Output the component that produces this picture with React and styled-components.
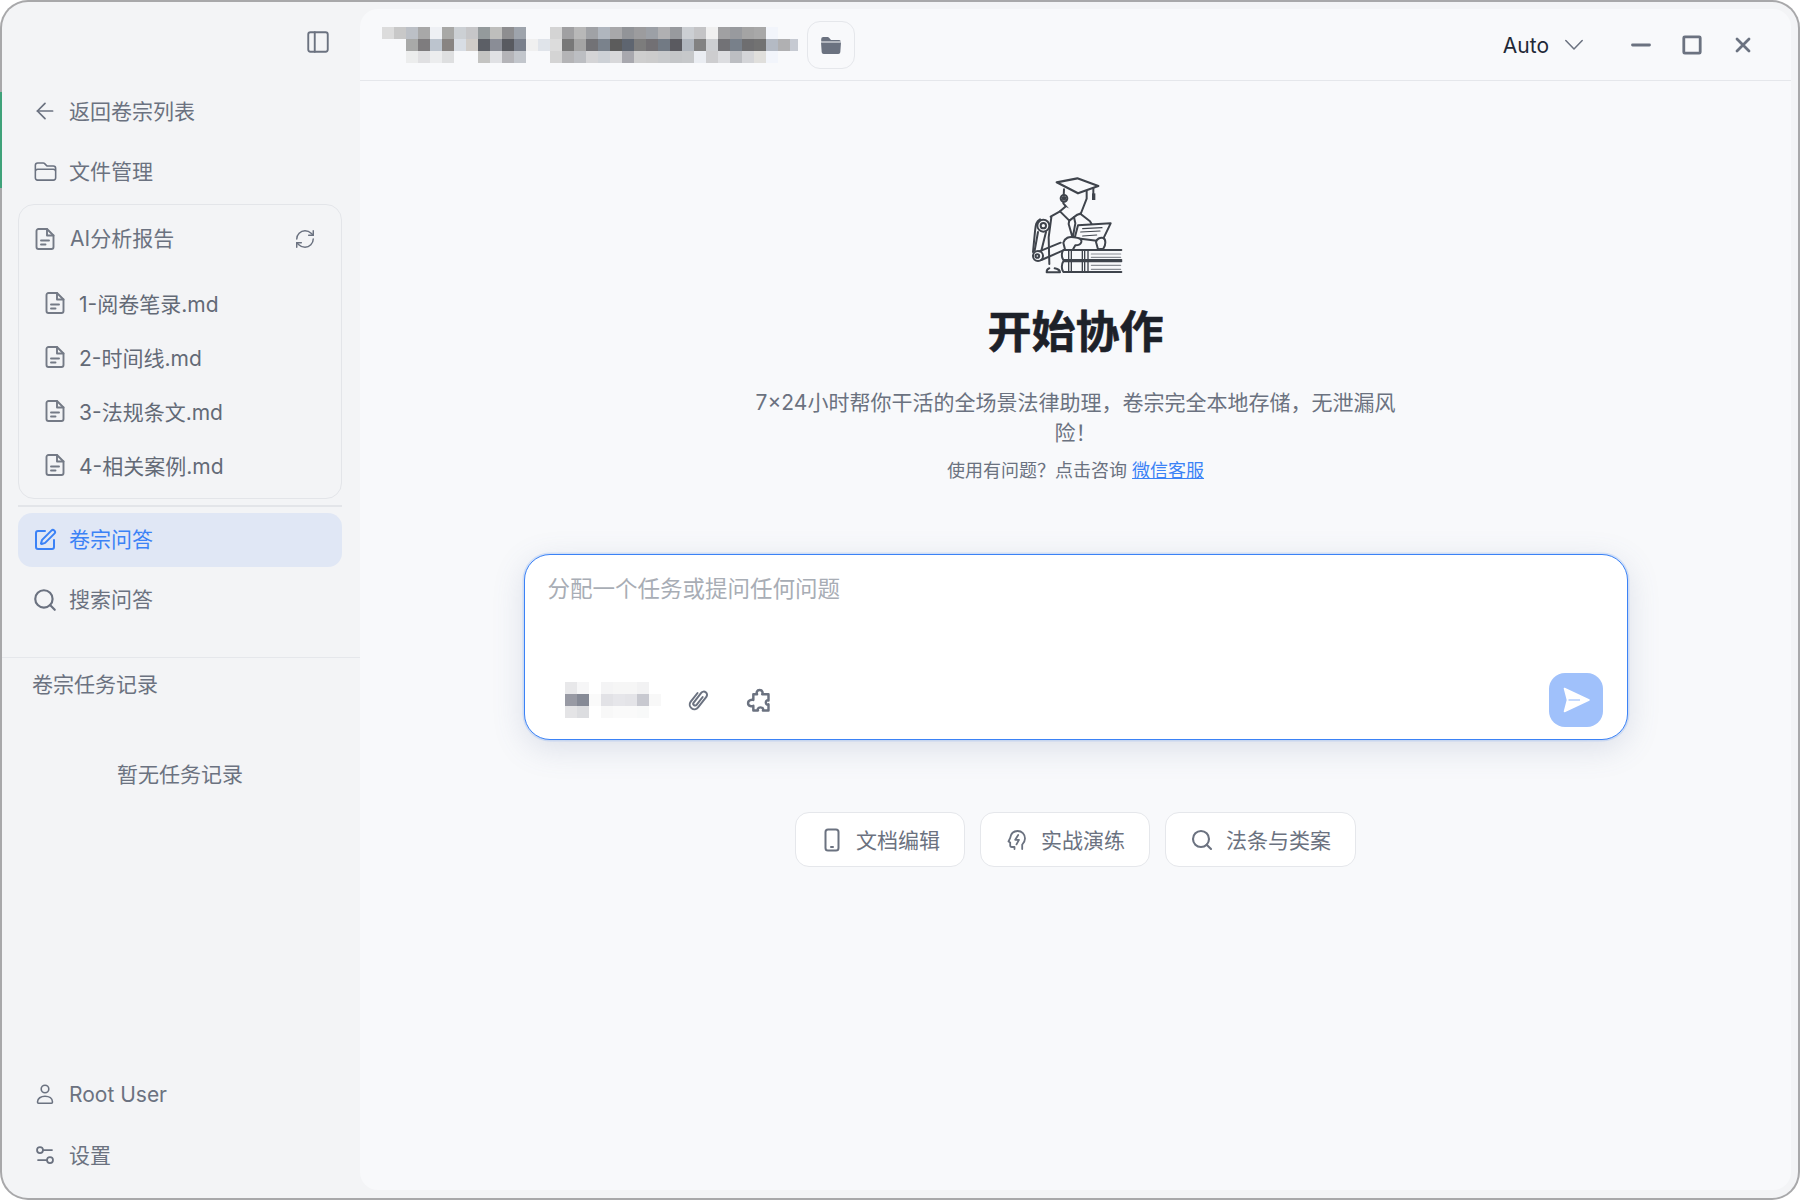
import React from 'react'
import styled, { createGlobalStyle } from 'styled-components'
import { ArrowLeft, PanelLeft, RefreshCw, SquarePen, Search, Settings2 } from 'lucide-react'
import { HiOutlineFolder } from 'react-icons/hi2'

const titleCells = [
  { col: 0, cells: ['#dcdcdc', '#c8c8c8', '#bcc0c6', '#a8a8a8', '#eef0f4', '#a8a8a6', '#ccd0d4', '#c6c6c8', '#949a9c', '#bebebc', '#8e8e90', '#9ea4ac', '', '', '#d4d4d4', '#a0a0a2', '#b8b8b8', '#a0a2a6', '#b0b6be', '#a8a8aa', '#929498', '#9c9c9e', '#9ca0a6', '#b0b0b2', '#989a9e', '#cccfd3', '#c4c4c6', '#f0f0f0', '#a0a0a2', '#989a9e', '#a4a4a4', '#a8a8a8', '#f2f5fb'] },
  { col: 2, cells: ['#a8a9a8', '#7e7c7e', '#bcc4ce', '#888482', '#d8dde4', '#d0ccc8', '#5c5f66', '#8a8d96', '#585a60', '#7a808c', '#f0f0f0', '#e0e4ea', '#dcdcdc', '#787878', '#a4a4a4', '#727276', '#7a828c', '#5c5c5c', '#5e6570', '#7c7c7c', '#727074', '#727a84', '#5a5a60', '#b0b6be', '#828282', '#cdcfd2', '#727276', '#78808a', '#6e6e70', '#727272', '#b4bac4', '#b0b0b2', '#c6cad2'] },
  { col: 2, cells: ['#eceded', '#e0e0e2', '#ecedee', '#dedfe0', '', '', '#c4c4c2', '#e0e1e4', '#b4b4b8', '#c2c6cc', '', '', '#d4d4d4', '#b4b4b6', '#bcbec2', '#d4d4d6', '#cdd1d6', '#d8d8da', '#a8a8ae', '#cecece', '#cccccc', '#c8cacc', '#c4c6c8', '#c6c8ca', '#eaedf2', '#cdcdcf', '#dcdde0', '#bcbec2', '#d4d5d8', '#e0dfdc', '#f2f5fb'] },
]

const modelCells = [
  { col: 0, cells: ['#e8e8ea', '#f6f6f7', '', '#f4f4f5', '#f6f6f6', '#f6f6f6', '#f2f2f3'] },
  { col: 0, cells: ['#989aa4', '#868a96', '#fafafa', '#e2e2e6', '#e6e6ea', '#e4e4e8', '#c8c9d0', '#f8f8f8'] },
  { col: 0, cells: ['#e4e4e6', '#dcdde0', '', '#f8f8f8', '#fafafa', '#fafafa', '#f8f9f9'] },
]

const fileNames = ['1-阅卷笔录.md', '2-时间线.md', '3-法规条文.md', '4-相关案例.md']

const GlobalStyle = createGlobalStyle`
  * { box-sizing: border-box; }
  html, body { margin: 0; padding: 0; background: #fff; }
  body {
    font-family: Inter, "Noto Sans CJK SC", sans-serif;
    color: #6b7280;
  }
`

const Desktop = styled.div`
  position: relative;
  width: 1800px;
  height: 1200px;
  padding: 2px;
  overflow: hidden;

  &::before {
    content: '';
    position: absolute;
    z-index: 2;
    left: 0;
    top: 92px;
    width: 2px;
    height: 96px;
    background: #3fa27a;
  }
`

const Window = styled.div`
  display: flex;
  width: 100%;
  height: 100%;
  background: #f3f4f6;
  border-radius: 26px;
  box-shadow: 0 0 0 2px #a8a8aa;
  overflow: hidden;
`

const Sidebar = styled.aside`
  display: flex;
  flex-direction: column;
  flex: 0 0 358px;
  padding-bottom: 16px;
`

const SidebarTop = styled.div`
  display: flex;
  justify-content: flex-end;
  align-items: center;
  height: 82px;
  padding: 0 29px 2px 0;
  color: #6b7280;
`

const NavGroup = styled.nav`
  display: flex;
  flex-direction: column;
  gap: 6px;
  padding: 0 18px 0 16px;
`

const NavItem = styled.div`
  display: flex;
  align-items: center;
  gap: 12px;
  height: 54px;
  padding: 0 15px;
  border-radius: 14px;
  font-size: 21px;
  color: ${(p) => (p.$active ? '#3b82f6' : '#6b7280')};
  background: ${(p) => (p.$active ? '#e0e7f5' : 'transparent')};
`

// the CJK face sits a little low next to the icons
const Label = styled.span`
  margin-bottom: ${(p) => p.$lift ?? 3}px;
  flex: ${(p) => (p.$grow ? 1 : 'none')};
`

const BackIcon = styled(ArrowLeft)`
  margin: 0 -1px;
`

const FolderIcon = styled(HiOutlineFolder)`
  margin: 0 -0.5px;
`

const SearchIcon = styled(Search)`
  margin: 0 -1px;
`

const ReportBox = styled.div`
  display: flex;
  flex-direction: column;
  height: 295px;
  border: 1.5px solid #e3e5e9;
  border-radius: 16px;
`

const ReportHead = styled.div`
  display: flex;
  align-items: center;
  gap: 13px;
  height: 71px;
  padding: 0 25px 4px 14px;
  font-size: 21px;
`

const FileRow = styled.div`
  display: flex;
  align-items: center;
  gap: 12px;
  height: 54px;
  padding-left: 24px;
  font-size: 21px;
  color: #636a76;
`

const FileGlyph = styled.svg`
  flex: none;
`

const NavRule = styled.div`
  height: 1.5px;
  background: #e3e5e9;
`

const HistorySection = styled.section`
  margin-top: 30px;
  border-top: 1.5px solid #e5e7eb;
  padding-top: 12px;
`

const HistoryTitle = styled.div`
  padding-left: 30px;
  font-size: 21px;
  line-height: 30px;
`

const HistoryEmpty = styled.div`
  margin-top: 60px;
  padding-right: 2px;
  text-align: center;
  font-size: 21px;
  line-height: 30px;
`

const SidebarFoot = styled(NavGroup)`
  gap: 7px;
  margin-top: auto;
`

const Main = styled.main`
  display: flex;
  flex-direction: column;
  flex: 1;
  margin: 7px 7px 8px 0;
  background: #f8f9fb;
  border-radius: 18px;
`

const Header = styled.header`
  display: flex;
  align-items: center;
  flex: 0 0 72px;
  padding: 0 23px 0 22px;
  border-bottom: 1.5px solid #e5e7eb;
`

const Pixels = styled.svg`
  display: block;
  flex: none;
`

const FolderButton = styled.button`
  display: flex;
  align-items: center;
  justify-content: center;
  width: 48px;
  height: 48px;
  margin-left: 9px;
  padding: 0;
  background: transparent;
  border: 1.5px solid #e5e7eb;
  border-radius: 13px;
  color: #6b7280;
`

const ThemePicker = styled.div`
  display: flex;
  align-items: center;
  gap: 13px;
  margin-left: auto;
  font-size: 21px;
  color: #1f2937;

  span {
    margin-top: 2px;
  }
`

const WindowControls = styled.div`
  display: flex;
  margin-left: 29px;
`

const WindowButton = styled.div`
  display: flex;
  align-items: center;
  justify-content: center;
  width: 51px;
  height: 40px;
  color: #6b7280;
`

const Content = styled.div`
  display: flex;
  flex-direction: column;
  align-items: center;
  padding-top: 79px;
`

const Title = styled.h1`
  margin: 12px 0 0;
  font-size: 44px;
  line-height: 60px;
  font-weight: 700;
  color: #1d2129;
  -webkit-text-stroke: 0.6px #1d2129;
`

const Description = styled.p`
  width: 672px;
  margin: 26px 0 0;
  text-align: center;
  font-size: 21px;
  line-height: 30px;
  color: #6b7280;
`

const Help = styled.p`
  margin: 9px 0 0;
  font-size: 18px;
  line-height: 28px;
  color: #6b7280;

  a {
    color: #3b82f6;
    text-decoration: underline;
  }
`

const Composer = styled.div`
  display: flex;
  flex-direction: column;
  width: 1104px;
  height: 186px;
  margin-top: 69px;
  padding: 17px 24px 12px 23px;
  background: #fff;
  border: 1.75px solid #3b82f6;
  border-radius: 26px;
  box-shadow: 0 0 0 1.5px rgba(59, 130, 246, 0.16), 0 8px 32px rgba(90, 106, 150, 0.18);
`

const Prompt = styled.textarea`
  flex: 1;
  padding: 0;
  border: 0;
  outline: 0;
  resize: none;
  background: transparent;
  font: inherit;
  font-size: 22.5px;
  line-height: 34px;

  &::placeholder {
    color: #a8adb5;
    opacity: 1;
  }
`

const ComposerBar = styled.div`
  display: flex;
  align-items: center;
  padding-left: 17px;
`

const ToolButton = styled.div`
  display: flex;
  align-items: center;
  justify-content: center;
  width: 40px;
  height: 40px;
  margin-left: ${(p) => p.$gap}px;
  color: #6b7280;
`

const SendButton = styled.button`
  display: flex;
  align-items: center;
  justify-content: center;
  width: 54px;
  height: 54px;
  margin-left: auto;
  padding: 0;
  border: 0;
  border-radius: 16px;
  background: #a0c1fb;
`

const Suggestions = styled.div`
  display: flex;
  gap: 15px;
  margin-top: 72px;
`

const Suggestion = styled.button`
  display: flex;
  align-items: center;
  gap: 12px;
  height: 55px;
  padding: 0 24px;
  background: #fff;
  border: 1.5px solid #e5e7eb;
  border-radius: 14px;
  font: inherit;
  font-size: 21px;
  color: #6b7280;
`

const Link = styled.a``

function PixelBlock({ rows, width }) {
  return (
    <Pixels width={width} height={42} viewBox={`0 0 ${width} 42`} shapeRendering="crispEdges">
      {rows.map((row, y) =>
        row.cells.map((fill, x) =>
          fill ? <rect key={`${y}-${x}`} x={(row.col + x) * 12} y={3 + y * 12} width="12" height="12" fill={fill} /> : null,
        ),
      )}
    </Pixels>
  )
}

function FileIcon() {
  return (
    <FileGlyph width="24" height="24" viewBox="0 0 24 24" fill="none" stroke="#747a86" strokeWidth="1.9" strokeLinecap="round" strokeLinejoin="round">
      <path d="M14 2H5.500a2 2 0 0 0-2 2v16a2 2 0 0 0 2 2h13a2 2 0 0 0 2-2V8.500z" />
      <path d="M14 2v6.500h6.500" />
      <path d="M8 13.500h8" />
      <path d="M8 17.500h4.500" />
    </FileGlyph>
  )
}

function UserIcon() {
  return (
    <svg width="24" height="24" viewBox="0 0 24 24" fill="none" stroke="currentColor" strokeWidth="1.6" strokeLinejoin="round">
      <circle cx="12" cy="7" r="3.800" />
      <path d="M4.500 20c0-3.600 3.400-5.800 7.500-5.800s7.500 2.200 7.500 5.800c0 .7-.5 1.200-1 1.200h-13c-.5 0-1-.5-1-1.200z" />
    </svg>
  )
}

function FolderFill() {
  return (
    <svg width="24" height="24" viewBox="0 0 24 24" fill="currentColor">
      <path d="M2.200 8.400V6a2 2 0 0 1 2-2h4.400a2 2 0 0 1 1.500.7L12 7h7.800a2 2 0 0 1 2 1.400z" />
      <path d="M2 9.600h20l-.7 9.600a2 2 0 0 1-2 1.800H4.700a2 2 0 0 1-2-1.800z" />
    </svg>
  )
}

function MinimizeIcon() {
  return (
    <svg width="24" height="24" viewBox="0 0 24 24" fill="none" stroke="currentColor" strokeWidth="2.800" strokeLinecap="round">
      <path d="M3.500 12h17" />
    </svg>
  )
}

function MaximizeIcon() {
  return (
    <svg width="24" height="24" viewBox="0 0 24 24" fill="none" stroke="currentColor" strokeWidth="2.800">
      <rect x="3.800" y="3.800" width="16.400" height="16.400" rx="1" />
    </svg>
  )
}

function CloseIcon() {
  return (
    <svg width="24" height="24" viewBox="0 0 24 24" fill="none" stroke="currentColor" strokeWidth="2.800" strokeLinecap="round">
      <path d="M6 6l12 12M18 6L6 18" />
    </svg>
  )
}

function Chevron() {
  return (
    <svg width="24" height="24" viewBox="0 0 24 24" fill="none" stroke="#6b7280" strokeWidth="1.500" strokeLinecap="round" strokeLinejoin="round">
      <path d="M3.800 7.500L12 16l8.200-8.500" />
    </svg>
  )
}

function ClipIcon() {
  return (
    <svg width="28" height="28" viewBox="0 0 24 24" fill="none" stroke="currentColor" strokeWidth="1.700" strokeLinecap="round" strokeLinejoin="round">
      <path transform="rotate(38 12 12)" d="M8 7.500v9.500a4 4 0 0 0 8 0V5.500a2.800 2.800 0 0 0-5.600 0V16a1.600 1.600 0 0 0 3.200 0V7.500" />
    </svg>
  )
}

function PuzzleIcon() {
  return (
    <svg width="28" height="28" viewBox="0 0 24 24" fill="none" stroke="currentColor" strokeWidth="2.100" strokeLinejoin="round">
      <path d="M8 7h3.200c-.6-1-.5-3.500 2.200-3.500s2.800 2.500 2.200 3.500H21v5.500c-1-.5-2.300 0-2.300 1.600 0 1.700 1.300 2.200 2.300 1.600V21h-4.800c.5-1 .2-2.700-2.100-2.700s-2.600 1.700-2.100 2.700H8v-4c-1 .6-4.500.6-4.500-2.300S7 11.500 8 12z" />
    </svg>
  )
}

function PhoneIcon() {
  return (
    <svg width="24" height="24" viewBox="0 0 24 24" fill="none" stroke="currentColor" strokeWidth="2" strokeLinecap="round">
      <rect x="5.500" y="1.500" width="13" height="21" rx="2.500" />
      <path d="M11 19h2" />
    </svg>
  )
}

function HeadBoltIcon() {
  return (
    <svg width="24" height="24" viewBox="0 0 24 24" fill="none" stroke="currentColor" strokeWidth="1.800" strokeLinecap="round" strokeLinejoin="round">
      <path d="M9.500 21v-2H7a1.800 1.800 0 0 1-1.800-1.800V14.500L3.500 13.500l1.700-3.600C5.800 5.800 8.600 3 12.600 3c4.300 0 7.400 3.300 7.400 7.600 0 2.700-1.100 4.400-2.800 6V21" />
      <path d="M13.200 7l-3 4.800h3.800L11.500 16.400" />
    </svg>
  )
}

function SendGlyph() {
  return (
    <svg width="54" height="54" viewBox="0 0 54 54">
      <path d="M15.500 15.500L40 27 15.500 38.500 18.500 27z" fill="#fff" stroke="#fff" strokeWidth="1.600" strokeLinejoin="round" />
      <path d="M19.500 27H31" stroke="#a0c1fb" strokeWidth="1.200" />
    </svg>
  )
}

function RobotLogo() {
  return (
    <svg width="160" height="130" viewBox="-14 0 480 390" fill="none" stroke="#3f444c" strokeWidth="6" strokeLinecap="round" strokeLinejoin="round">
      <path d="M152 172l-8 60 2 80" />
      <path d="M178 154l-28 16M240 162l28 22 8 14" />
      <path d="M190 88l-2 42 30 35 22-3 18-46V94" fill="#f8f9fb" />
      <path d="M168 67L230 55 293 78 232 100z" fill="#f8f9fb" strokeWidth="6.500" />
      <path d="M278 84v16" />
      <rect x="274" y="100" width="10" height="20" fill="#3f444c" stroke="none" />
      <circle cx="190" cy="115" r="10" fill="#f8f9fb" />
      <circle cx="190" cy="115" r="4" fill="#3f444c" />
      <path d="M194 140l-16 14 28 28 24-18 10-4" fill="#f8f9fb" />
      <path d="M206 180l-2 12 12 42 8-44-4-18" />
      <path d="M118 178c-12 6-13 18-15 36L97 276" />
      <circle cx="128" cy="197" r="18" fill="#f8f9fb" />
      <circle cx="128" cy="197" r="8" />
      <path d="M136 216l-14 56M112 216l-10 56" />
      <circle cx="112" cy="288" r="15" fill="#f8f9fb" />
      <circle cx="110" cy="288" r="5.500" />
      <path d="M122 300l64-28M116 274l64-26" />
      <path d="M232 196L330 190 304 244 288 242 222 234z" fill="#f8f9fb" />
      <path d="M246 206l58-3M240 216l58-3M246 228l42-3" strokeWidth="3.500" />
      <path d="M188 248c4-14 18-20 32-16 14 2 24 4 22 14-2 8-10 10-18 10l-8 14-22 2z" fill="#f8f9fb" />
      <path d="M286 246c2-10 12-14 22-12 8 4 8 22 0 32l-16 2z" fill="#f8f9fb" />
      <path d="M362 270H188c-6 8-6 22 0 30h174" fill="#f8f9fb" />
      <path d="M362 304H188c-6 8-6 24 0 32h174" fill="#f8f9fb" />
      <path d="M204 272v28M212 272v28M245 272v28M252 272v28M262 272v28M204 306v30M212 306v30M245 306v30M252 306v30M262 306v30" strokeWidth="4" />
      <path d="M272 282h88M272 292h88M272 316h88M272 328h88" strokeWidth="3.500" stroke="#8a8e95" />
      <path d="M146 325c-8 2-8 8-8 12h40c0-4-6-10-16-12" fill="#f8f9fb" />
    </svg>
  )
}

export default function App() {
  return (
    <Desktop>
      <GlobalStyle />
      <Window>
        <Sidebar>
          <SidebarTop>
            <PanelLeft size={26} strokeWidth={1.75} />
          </SidebarTop>
          <NavGroup>
            <NavItem>
              <BackIcon size={26} strokeWidth={1.6} />
              <Label>返回卷宗列表</Label>
            </NavItem>
            <NavItem>
              <FolderIcon size={25} />
              <Label>文件管理</Label>
            </NavItem>
            <ReportBox>
              <ReportHead>
                <FileIcon />
                <Label $grow>AI分析报告</Label>
                <RefreshCw size={22} strokeWidth={1.6} />
              </ReportHead>
              {fileNames.map((name) => (
                <FileRow key={name}>
                  <FileIcon />
                  <Label $lift={1}>{name}</Label>
                </FileRow>
              ))}
            </ReportBox>
            <NavRule />
            <NavItem $active>
              <SquarePen size={24} strokeWidth={2} />
              <Label>卷宗问答</Label>
            </NavItem>
            <NavItem>
              <SearchIcon size={26} strokeWidth={2} />
              <Label>搜索问答</Label>
            </NavItem>
          </NavGroup>
          <HistorySection>
            <HistoryTitle>卷宗任务记录</HistoryTitle>
            <HistoryEmpty>暂无任务记录</HistoryEmpty>
          </HistorySection>
          <SidebarFoot>
            <NavItem>
              <UserIcon />
              <Label $lift={0}>Root User</Label>
            </NavItem>
            <NavItem>
              <Settings2 size={24} strokeWidth={1.75} />
              <Label>设置</Label>
            </NavItem>
          </SidebarFoot>
        </Sidebar>

        <Main>
          <Header>
            <PixelBlock rows={titleCells} width={416} />
            <FolderButton>
              <FolderFill />
            </FolderButton>
            <ThemePicker>
              <span>Auto</span>
              <Chevron />
            </ThemePicker>
            <WindowControls>
              <WindowButton>
                <MinimizeIcon />
              </WindowButton>
              <WindowButton>
                <MaximizeIcon />
              </WindowButton>
              <WindowButton>
                <CloseIcon />
              </WindowButton>
            </WindowControls>
          </Header>

          <Content>
            <RobotLogo />
            <Title>开始协作</Title>
            <Description>7×24小时帮你干活的全场景法律助理，卷宗完全本地存储，无泄漏风险！</Description>
            <Help>
              使用有问题？点击咨询 <Link href="#">微信客服</Link>
            </Help>

            <Composer>
              <Prompt placeholder="分配一个任务或提问任何问题" />
              <ComposerBar>
                <PixelBlock rows={modelCells} width={96} />
                <ToolButton $gap={17}>
                  <ClipIcon />
                </ToolButton>
                <ToolButton $gap={20}>
                  <PuzzleIcon />
                </ToolButton>
                <SendButton>
                  <SendGlyph />
                </SendButton>
              </ComposerBar>
            </Composer>

            <Suggestions>
              <Suggestion>
                <PhoneIcon />
                <Label $lift={1}>文档编辑</Label>
              </Suggestion>
              <Suggestion>
                <HeadBoltIcon />
                <Label $lift={1}>实战演练</Label>
              </Suggestion>
              <Suggestion>
                <Search size={24} strokeWidth={2.1} />
                <Label $lift={1}>法条与类案</Label>
              </Suggestion>
            </Suggestions>
          </Content>
        </Main>
      </Window>
    </Desktop>
  )
}
